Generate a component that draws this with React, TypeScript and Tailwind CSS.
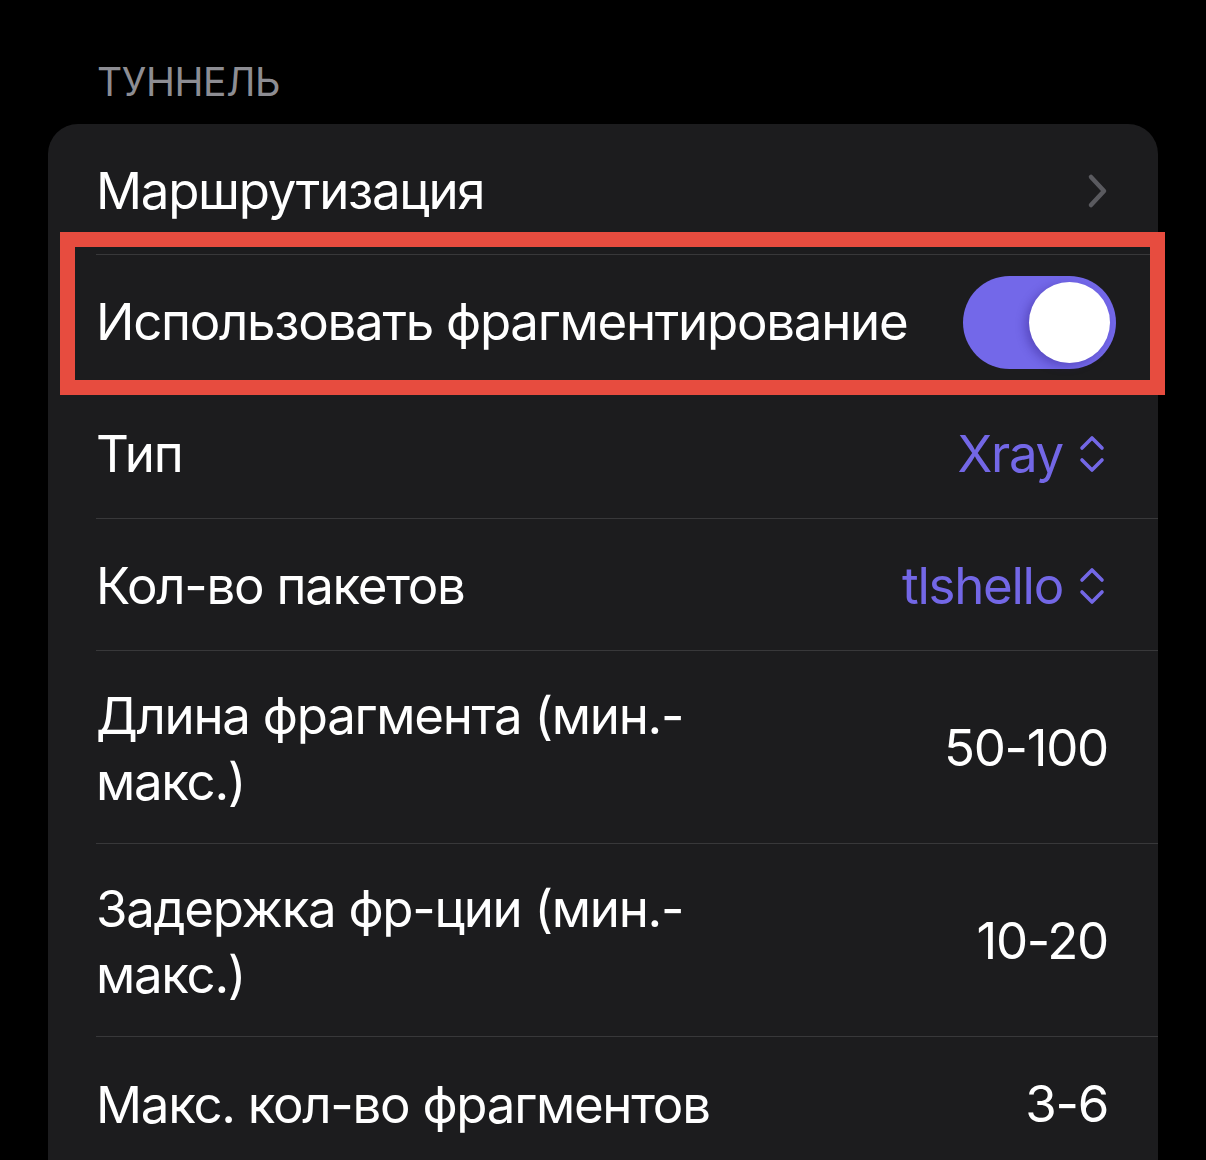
import React from 'react'

function Chevron() {
  return (
    <svg width="21" height="36" viewBox="0 0 21 36" fill="none">
      <path d="M4 4 L17 18 L4 32" stroke="#5a5a5f" strokeWidth="4.5" strokeLinecap="round" strokeLinejoin="round" />
    </svg>
  )
}

function UpDown() {
  return (
    <svg width="26" height="38" viewBox="0 0 26 38" fill="none">
      <path d="M3 13 L13 3 L23 13" stroke="#7367e6" strokeWidth="3.6" strokeLinecap="round" strokeLinejoin="round" />
      <path d="M3 25 L13 35 L23 25" stroke="#7367e6" strokeWidth="3.6" strokeLinecap="round" strokeLinejoin="round" />
    </svg>
  )
}

function Row({
  children,
  right,
  h = 'h-[132px]',
  last,
  pr = 'pr-[50px]',
}: {
  children: React.ReactNode
  right?: React.ReactNode
  h?: string
  last?: boolean
  pr?: string
}) {
  return (
    <div className="flex pl-[48px]">
      <div
        className={`flex flex-1 items-center justify-between pt-[3px] ${pr} ${h} ${
          last ? '' : 'border-b border-[#38383a]'
        }`}
      >
        <div className="leading-[66px]">{children}</div>
        {right}
      </div>
    </div>
  )
}

function Picker({ value }: { value: string }) {
  return (
    <div className="flex items-center gap-[16px] text-[#7367e6]">
      <span>{value}</span>
      <UpDown />
    </div>
  )
}

export default function App() {
  return (
    <div
      className="h-[1160px] overflow-hidden bg-black text-white text-[51px] tracking-[-0.025em]"
      style={{ fontFamily: 'Inter, "Noto Sans", sans-serif' }}
    >
      <div className="pt-[58px] pb-[18px] pl-[97px] text-[39px] leading-[48px] tracking-[-0.01em] text-[#8d8d93]">
        ТУННЕЛЬ
      </div>

      <div className="mx-[48px] rounded-t-[30px] bg-[#1c1c1e]">
        <Row h="h-[131px]" right={<Chevron />}>
          Маршрутизация
        </Row>

        <div className="relative">
          <Row
            pr="pr-[42px]"
            right={
              <div className="flex h-[93px] w-[153px] items-center justify-end rounded-full bg-[#7368e9] pr-[6px]">
                <div className="h-[81px] w-[81px] rounded-full bg-white shadow-[-4px_3px_10px_rgba(40,20,120,0.35)]" />
              </div>
            }
          >
            Использовать фрагментирование
          </Row>
          <div className="pointer-events-none absolute top-[-23px] bottom-[-8px] left-[12px] right-[-7px] border-[15px] border-[#e74c3f]" />
        </div>

        <Row pr="pr-[53px]" right={<Picker value="Xray" />}>
          Тип
        </Row>

        <Row pr="pr-[53px]" right={<Picker value="tlshello" />}>
          Кол-во пакетов
        </Row>

        <Row h="h-[193px]" right={<span>50-100</span>}>
          Длина фрагмента (мин.-
          <br />
          макс.)
        </Row>

        <Row h="h-[193px]" right={<span>10-20</span>}>
          Задержка фр-ции (мин.-
          <br />
          макс.)
        </Row>

        <Row last right={<span>3-6</span>}>
          Макс. кол-во фрагментов
        </Row>
      </div>
    </div>
  )
}
